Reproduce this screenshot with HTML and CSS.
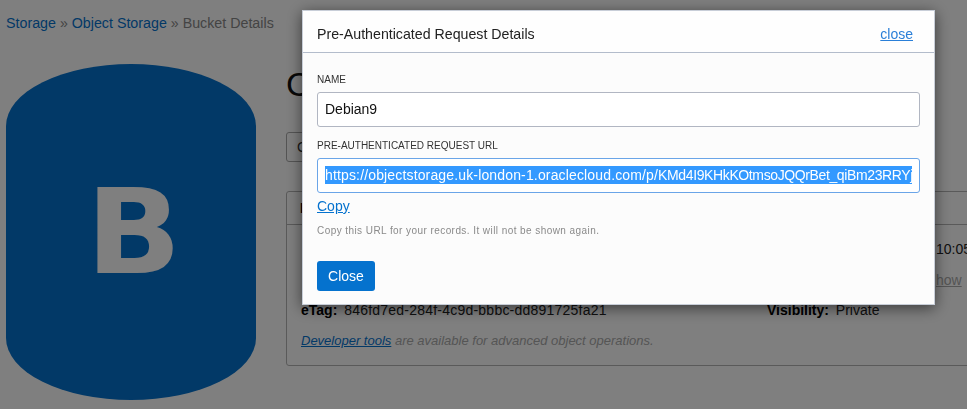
FILE: index.html
```html
<!DOCTYPE html>
<html lang="en">
<head>
<meta charset="utf-8">
<title>Bucket Details</title>
<link rel="stylesheet" href="styles.css">
</head>
<body>
<nav class="crumbs"><a href="#">Storage</a> » <a href="#">Object Storage</a> » Bucket Details</nav>
<div class="page">
  <div class="bucket-icon"><span>B</span></div>
  <main class="main">
    <h1 class="title">C</h1>
    <div class="actions"><button class="btn-ghost">C</button></div>
    <section class="panel">
      <h2 class="panel-head">B</h2>
      <div class="panel-grid">
        <div class="row-right"><span class="time">10:05:12</span></div>
        <div class="row-right"><a class="muted-link" href="#">how</a></div>
        <div class="etag"><b>eTag:</b> <span class="hash">846fd7ed-284f-4c9d-bbbc-dd891725fa21</span></div>
        <div class="vis"><b>Visibility:</b> Private</div>
      </div>
      <p class="dev"><a href="#">Developer tools</a> are available for advanced object operations.</p>
    </section>
  </main>
</div>
<div class="overlay"></div>
<div class="modal">
  <header class="modal-head">
    <span>Pre-Authenticated Request Details</span>
    <a href="#">close</a>
  </header>
  <div class="modal-body">
    <label class="field-label">Name</label>
    <div class="field">Debian9</div>
    <label class="field-label second">Pre-Authenticated Request URL</label>
    <div class="field focus"><span class="selected"><span class="url-a">https://objectstorage.uk-london-1.oraclecloud.com/p/</span><span class="url-b">KMd4I9KHkKOtmsoJQQrBet_qiBm23RRYj</span></span></div>
    <a class="copy" href="#">Copy</a>
    <p class="help">Copy this URL for your records. It will not be shown again.</p>
    <button class="btn-primary">Close</button>
  </div>
</div>
</body>
</html>
```

FILE: styles.css
```css
* { box-sizing: border-box; }
html, body { margin: 0; height: 409px; overflow: hidden; }
body { background: #fff; color: #333; font: 14px/20px "Liberation Sans", Arial, sans-serif; }
a { color: #0572ce; }

.crumbs { padding: 13px 0 0 6px; height: 64px; color: #888; font-size: 14.25px; }
.crumbs a { text-decoration: none; }

.page { display: flex; gap: 30px; padding-left: 6px; }
.bucket-icon { flex: none; width: 250px; height: 336px; background: #0572ce; border-radius: 125px / 62px;
  display: flex; justify-content: center; padding: 110px 0 0 5px; color: #fff; }
.bucket-icon span { font: bold 117px/117px "DejaVu Sans", sans-serif; height: 117px; transform: scaleX(1.07); }

.main { flex: none; width: 720px; }
.title { margin: 0; font-size: 34px; line-height: 40px; font-weight: 400; color: #111; }
.actions { margin-top: 28px; }
.btn-ghost { display: block; width: 200px; height: 30px; border: 1px solid #aaa; border-radius: 3px; background: #fff;
  font: 14px "Liberation Sans", Arial, sans-serif; color: #333; text-align: left; padding: 0 10px; }
.panel { margin-top: 29px; height: 175px; border: 1px solid #b4b4b4; border-radius: 3px; }
.panel-head { margin: 0; height: 33px; padding: 6px 13px; font-size: 14px; line-height: 20px; color: #000; border-bottom: 1px solid #b4b4b4; }
.panel-grid { display: grid; grid-template-columns: 466px 1fr; grid-auto-rows: 31px; padding: 9px 0 0 14px; color: #222; }
.row-right { grid-column: 2; padding-left: 169px; line-height: 31px; }
.muted-link { color: #aaa; }
.etag, .vis { line-height: 29px; }
.etag b, .vis b { margin-right: 3px; color: #000; }
.hash { letter-spacing: .22px; }
.dev { margin: 4px 0 0 14px; font-size: 13px; font-style: italic; color: #aaa; }

.overlay { position: fixed; inset: 0; background: rgba(0, 0, 0, .5); }

.modal { position: fixed; left: 302px; top: 10px; width: 633px; height: 295px; background: #fcfcfc;
  border: 1px solid #c8ced8; box-shadow: 0 3px 14px rgba(0, 0, 0, .55); color: #222; }
.modal-head { height: 42px; padding: 5px 21px 0 14px; display: flex; align-items: center; justify-content: space-between;
  border-bottom: 1px solid #b3bccb; background: #fefefe; font-size: 14.2px; }
.modal-head a { color: #2a7fd8; font-size: 14px; }
.modal-body { padding: 20px 14px 0; }
.field-label { display: block; height: 14px; font-size: 10px; line-height: 14px; text-transform: uppercase; color: #333; margin-bottom: 5px; }
.field-label.second { margin-top: 12px; margin-bottom: 5px; }
.field { height: 35px; background: #fff; border: 1px solid #b1b6c2; border-radius: 3px; padding: 0 7px; line-height: 33px;
  color: #111; white-space: nowrap; overflow: hidden; }
.field.focus { border-color: #6aa5e8; }
.selected { background: #3399ff; color: #fff; display: inline-block; width: 587px; overflow: hidden; line-height: 18px; vertical-align: middle; margin-top: -2px; }
.url-a { letter-spacing: .15px; }
.url-b { letter-spacing: -.38px; }
.copy { display: block; margin-top: 3px; line-height: 20px; width: max-content; color: #0572ce; }
.help { margin: 8px 0 0; font-size: 10px; line-height: 14px; letter-spacing: .43px; color: #8a8a8a; }
.btn-primary { display: block; margin-top: 23px; width: 58px; height: 30px; border: 0; border-radius: 3px; background: #0572ce; color: #fff;
  font: 14px "Liberation Sans", Arial, sans-serif; padding: 0; }
```
